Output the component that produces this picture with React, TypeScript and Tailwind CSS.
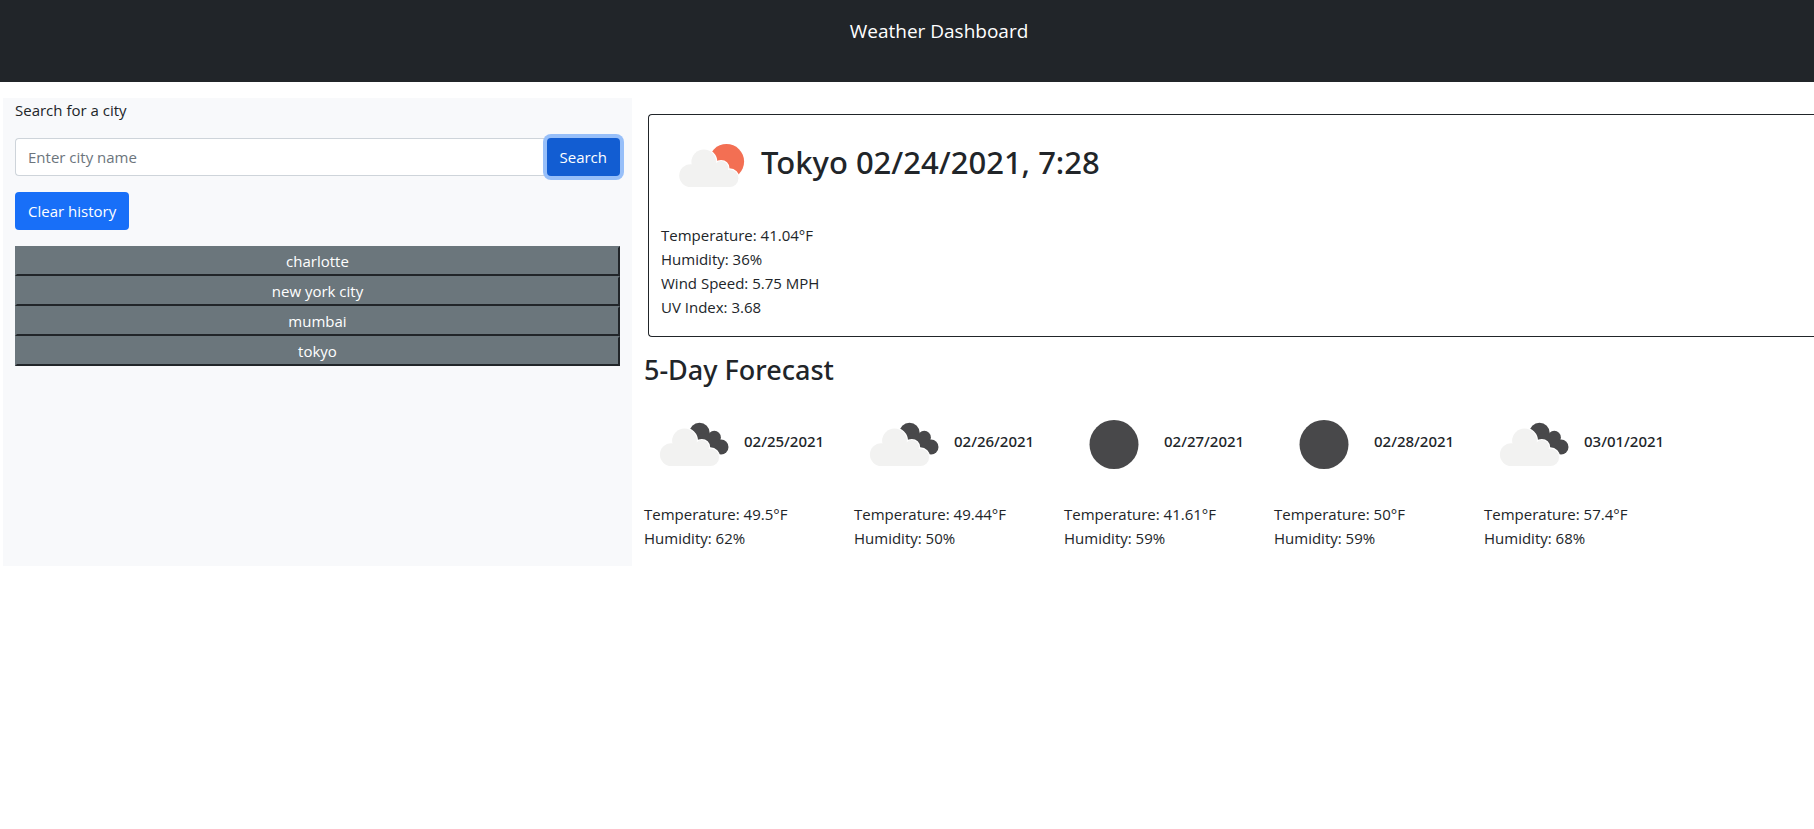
import { useState } from "react";

type Sky = "few-clouds" | "broken-clouds" | "clear-night";

interface Day {
  date: string;
  sky: Sky;
  temperature: string;
  humidity: string;
}

const days: Day[] = [
  { date: "02/25/2021", sky: "broken-clouds", temperature: "49.5", humidity: "62" },
  { date: "02/26/2021", sky: "broken-clouds", temperature: "49.44", humidity: "50" },
  { date: "02/27/2021", sky: "clear-night", temperature: "41.61", humidity: "59" },
  { date: "02/28/2021", sky: "clear-night", temperature: "50", humidity: "59" },
  { date: "03/01/2021", sky: "broken-clouds", temperature: "57.4", humidity: "68" },
];

const cities = ["charlotte", "new york city", "mumbai", "tokyo"];

function CloudShape() {
  return (
    <>
      <circle cx="26.8" cy="59.6" r="11.4" />
      <circle cx="40" cy="46" r="12.4" />
      <circle cx="57.3" cy="52.3" r="7.2" />
      <circle cx="65.8" cy="62.2" r="8.8" />
      <path d="M26.8 50 L40 46 L57.3 50 L65.8 60 V71 H26.8Z" />
    </>
  );
}

function FrontCloud() {
  return (
    <>
      <g fill="#fff" stroke="#fff" strokeWidth="2.4">
        <CloudShape />
      </g>
      <g fill="#f2f2f1">
        <CloudShape />
      </g>
    </>
  );
}

function WeatherIcon({ sky }: { sky: Sky }) {
  return (
    <svg viewBox="0 0 100 100" className="size-[100px] shrink-0" aria-hidden="true">
      {sky === "clear-night" && <circle cx="50" cy="49.5" r="24.5" fill="#48484a" />}
      {sky === "few-clouds" && (
        <>
          <circle cx="65.5" cy="45.6" r="17.6" fill="#f36f53" />
          <g transform="translate(2.8 0)">
            <FrontCloud />
          </g>
        </>
      )}
      {sky === "broken-clouds" && (
        <g transform="translate(0.5 0)">
          <g fill="#48484a">
            <circle cx="55" cy="38" r="10.2" />
            <circle cx="69.8" cy="42.4" r="6.6" />
            <circle cx="76.6" cy="52" r="7.4" />
            <path d="M55 38 L69.8 40 L76.6 52 L74 59 L50 55Z" />
          </g>
          <FrontCloud />
        </g>
      )}
    </svg>
  );
}

export default function App() {
  const [city, setCity] = useState("");

  return (
    <div className="font-['Open_Sans','Noto_Sans',sans-serif] text-[15px] leading-6 text-[#212529]">
      <header className="bg-[#212529] pt-4 pb-9 pl-16 text-center">
        <h1 className="text-[19px] leading-[30px] text-white">Weather Dashboard</h1>
      </header>

      <div className="mt-4 ml-[3px] grid grid-cols-[629fr_1182fr]">
        <aside className="bg-[#f8f9fb] px-3">
          <form onSubmit={(event) => event.preventDefault()}>
            <label htmlFor="city" className="mb-4 block">
              Search for a city
            </label>
            <div className="mb-4 flex">
              <input
                id="city"
                type="text"
                value={city}
                onChange={(event) => setCity(event.target.value)}
                placeholder="Enter city name"
                className="h-[38px] min-w-0 flex-1 rounded-l border border-r-0 border-[#ced4da] bg-white px-3 outline-none placeholder:text-[#6c757d]"
              />
              <button
                type="submit"
                className="h-[38px] rounded bg-[#125dd2] px-[13px] text-white ring-4 ring-[#97bff9]"
              >
                Search
              </button>
            </div>
            <button type="button" className="mb-4 h-[38px] rounded bg-[#186ff8] px-[13px] text-white">
              Clear history
            </button>
          </form>
          <ul>
            {cities.map((name) => (
              <li key={name}>
                <button
                  type="button"
                  className="block h-[30px] w-full border-2 border-t-[#6b767c] border-r-[#212529] border-b-[#212529] border-l-[#6b767c] bg-[#6b767c] leading-[26px] text-white"
                >
                  {name}
                </button>
              </li>
            ))}
          </ul>
        </aside>

        <main className="min-w-0 pl-3">
          <section className="mt-4 ml-1 rounded-l border border-r-0 border-[#212529] pt-px pb-[17px] pl-3">
            <div className="mb-[7px] flex items-center">
              <WeatherIcon sky="few-clouds" />
              <h2 className="pb-2 font-['Noto_Sans',sans-serif] text-[31px] leading-10 font-medium">
                Tokyo 02/24/2021, 7:28
              </h2>
            </div>
            <p>Temperature: 41.04°F</p>
            <p>Humidity: 36%</p>
            <p>Wind Speed: 5.75 MPH</p>
            <p>UV Index: 3.68</p>
          </section>

          <h3 className="mt-4 mb-2 font-['Noto_Sans',sans-serif] text-[27px] leading-[34px] font-medium">
            5-Day Forecast
          </h3>
          <div className="flex">
            {days.map((day) => (
              <article key={day.date} className="w-[210px] pb-4">
                <div className="mb-[7px] flex items-center">
                  <WeatherIcon sky={day.sky} />
                  <h4 className="pb-2 font-['Noto_Sans',sans-serif] text-[15px] font-medium">
                    {day.date}
                  </h4>
                </div>
                <p>Temperature: {day.temperature}°F</p>
                <p>Humidity: {day.humidity}%</p>
              </article>
            ))}
          </div>
        </main>
      </div>
    </div>
  );
}
